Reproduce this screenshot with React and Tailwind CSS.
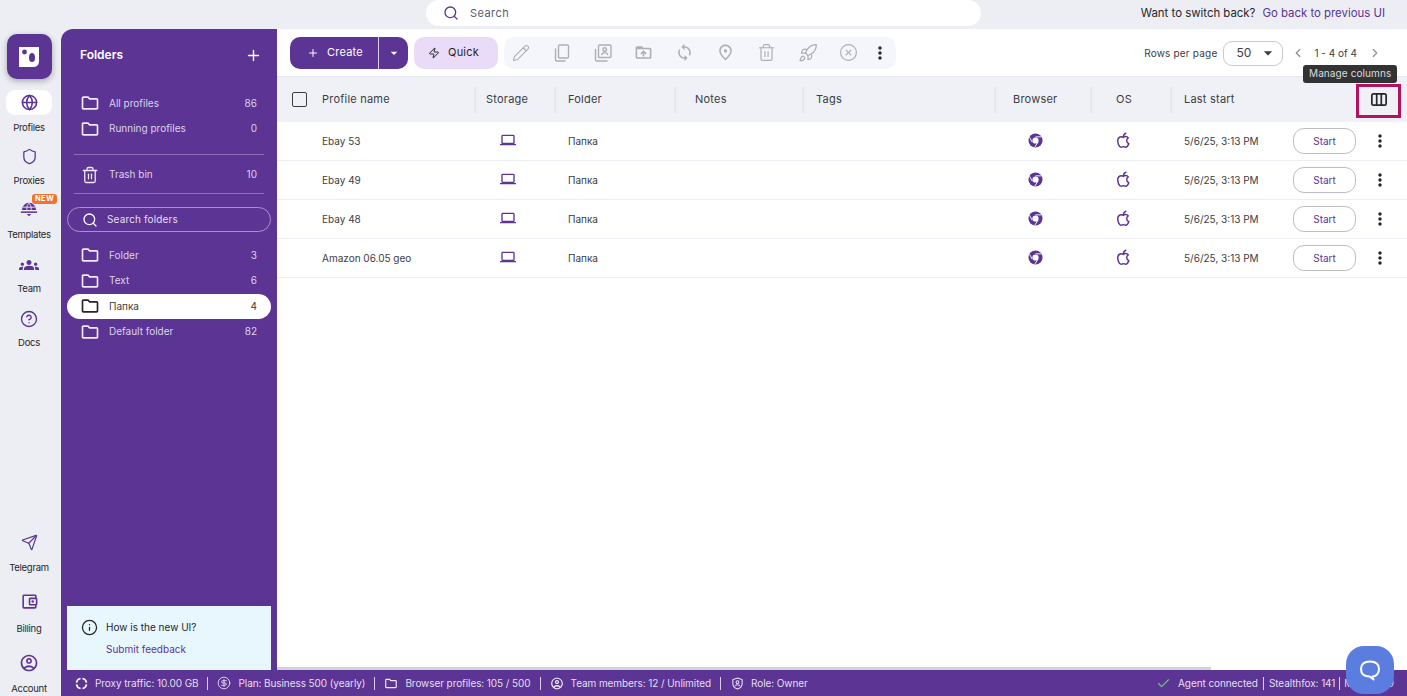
import {
  Check, ChevronLeft, ChevronRight, CircleDollarSign, CircleHelp, CircleX, Globe, Info,
  Pencil, Plus, Rocket, Search, Send, Shield, Trash2, Zap,
} from "lucide-react";
import {
  MdArrowDropDown, MdDriveFolderUpload, MdGroups, MdMoreVert, MdOutlineAccountBalanceWallet,
  MdOutlineAccountCircle, MdOutlineFolder, MdOutlineLaptop, MdOutlinePlace, MdSync,
} from "react-icons/md";

const profiles = ["Ebay 53", "Ebay 49", "Ebay 48", "Amazon 06.05 geo"];
const grid = "grid grid-cols-[198px_80px_120px_128px_192px_96px_80px_1fr]";

function Logo() {
  return (
    <svg viewBox="0 0 20 20" className="h-[20px] w-[20px]">
      <path d="M0 0H20V14Q20 20 14 20H0Z" fill="#fff" />
      <circle cx="5.500" cy="5" r="2.400" fill="#5b3494" />
      <ellipse cx="13" cy="10.500" rx="3" ry="4.600" fill="#5b3494" />
    </svg>
  );
}

function TemplatesIcon() {
  return (
    <svg viewBox="0 0 20 20" className="h-[18px] w-[18px] -translate-y-[2px]" fill="none" stroke="#5b3494" strokeWidth="1.700">
      <path d="M3 11a7 7 0 0 1 14 0" fill="#5b3494" />
      <path d="M7.500 11c0-4 1-6.500 2.500-7.500 1.500 1 2.500 3.500 2.500 7.500M3 8h14" stroke="#eceef3" strokeWidth="1" />
      <path d="M1 13.500h18" />
      <path d="M7.500 15.500h5L10 18z" fill="#5b3494" stroke="none" />
    </svg>
  );
}

function AppleIcon() {
  return (
    <svg viewBox="0 0 16 16" className="h-[17px] w-[17px]" fill="none" stroke="#5b3494" strokeWidth="1.400" strokeLinejoin="round" strokeLinecap="round">
      <path d="M8 5.200c-1-.8-2.200-1-3.300-.5C3 5.500 2.300 7.300 2.700 9.500c.4 2.300 1.800 4.800 3.300 4.800.8 0 1.200-.5 2-.5s1.200.5 2 .5c1.200 0 2.300-1.500 3-3.300-1.400-.7-2-1.800-2-3 0-1.100.5-1.900 1.500-2.500-.7-1-1.800-1.500-2.800-1.300-.7.1-1.200.4-1.700.5z" />
      <path d="M8 4.500c0-1.500.8-2.800 2.200-3.300" />
    </svg>
  );
}

function RailItem({ icon, label, active, badge, gap = "mt-[5px]" }) {
  return (
    <div className="relative flex min-h-[44px] w-full flex-col items-center">
      <div className={`flex h-[25px] w-[46px] items-center justify-center rounded-[9px] ${active ? "bg-white" : ""}`}>
        {icon}
      </div>
      {badge && (
        <span className="absolute right-[1px] top-[-4px] rounded-[3px] bg-[#f0742f] px-[3px] text-[7.500px] font-bold leading-[10px] tracking-[0.04em] text-white">
          NEW
        </span>
      )}
      <span className={`${gap} text-[9.500px] leading-[13px] tracking-[-0.03em] text-[#26262b]`}>{label}</span>
    </div>
  );
}

function FolderRow({ label, count, active, icon }) {
  return (
    <div
      className={`flex h-[25.500px] items-center rounded-[13px] px-[14px] ${
        active ? "bg-white text-[#3c3c42]" : "text-[#ddd3ec]"
      }`}
    >
      <span className={`flex w-[28px] ${active ? "text-[#26262b]" : "text-[#efeaf6]"}`}>
        {icon || <MdOutlineFolder size={20} className="-ml-[1px]" />}
      </span>
      <span className="flex-1 text-[10px]">{label}</span>
      <span className="text-[10px]">{count}</span>
    </div>
  );
}

function ToolIcon({ children }) {
  return <span className="flex w-[41px] items-center justify-center text-[#aeafb3]">{children}</span>;
}

function CopyIcon() {
  return (
    <svg viewBox="0 0 18 18" className="h-[18px] w-[18px]" fill="none" stroke="currentColor" strokeWidth="1.400">
      <rect x="5.500" y="1" width="10" height="13" rx="1" />
      <path d="M2.500 4.500V16a1 1 0 0 0 1 1h9" />
    </svg>
  );
}

function PortraitIcon() {
  return (
    <svg viewBox="0 0 18 18" className="h-[18px] w-[18px]" fill="none" stroke="currentColor" strokeWidth="1.400">
      <rect x="4.500" y="1" width="12.500" height="12.500" rx="1" />
      <circle cx="10.700" cy="5.500" r="1.800" />
      <path d="M7.500 11c.5-1.800 1.800-2.400 3.200-2.400s2.700.6 3.200 2.400" />
      <path d="M1.500 5v11a1 1 0 0 0 1 1h11" />
    </svg>
  );
}

function ColumnsIcon() {
  return (
    <svg viewBox="0 0 16 13" className="h-[13px] w-[16px]" fill="none" stroke="#26262b" strokeWidth="1.700">
      <rect x=".85" y=".85" width="14.300" height="11.300" rx="1.500" />
      <path d="M5.700 .85v11.300M10.300 .85v11.300" />
    </svg>
  );
}

function BrowserIcon() {
  return (
    <svg viewBox="0 0 16 16" className="h-[15px] w-[15px]">
      <circle cx="8" cy="8" r="7.500" fill="#5b3494" />
      <circle cx="8" cy="8" r="3.300" fill="#fff" />
      <path d="M8 4.100h6.300M4.500 9.800 1.600 4.500M10.800 9.500 7.300 15" stroke="#fff" strokeWidth="1" />
    </svg>
  );
}

function TrafficIcon() {
  return (
    <svg viewBox="0 0 14 14" className="h-[13px] w-[13px]" fill="none" stroke="#fff" strokeWidth="1.800">
      <path d="M6 1.600A5.500 5.500 0 0 0 1.600 6M1.600 8A5.500 5.500 0 0 0 6 12.400M8 12.400A5.500 5.500 0 0 0 12.400 8M12.400 6A5.500 5.500 0 0 0 8 1.600" />
    </svg>
  );
}

function RoleIcon() {
  return (
    <svg viewBox="0 0 14 14" className="h-[13px] w-[13px]" fill="none" stroke="#efeaf6" strokeWidth="1.100">
      <path d="M7 1 12 2.800V7c0 3-2.200 5-5 6-2.800-1-5-3-5-6V2.800z" />
      <circle cx="7" cy="5.600" r="1.500" />
      <path d="M4.500 9.800C5 8.800 6 8.400 7 8.400s2 .4 2.500 1.400" />
    </svg>
  );
}

function StatusItem({ icon, text }) {
  return (
    <span className="flex items-center gap-[7px] text-[10px] tracking-[-0.008em] text-[#e6dff1]">
      <span className="flex w-[14px] justify-center text-[#efeaf6]">{icon}</span>
      {text}
    </span>
  );
}

function Sep() {
  return <span className="mx-[9px] h-[13px] w-px bg-[#d9d0e8]" />;
}

function HeadCell({ children, pad = "pl-[11px]" }) {
  return (
    <div className={`-ml-px flex h-[26px] items-center border-l-2 border-[#e4e6eb] text-[11px] tracking-[0.02em] text-[#3c3c42] ${pad}`}>
      {children}
    </div>
  );
}

export default function App() {
  return (
    <div className="flex h-screen w-full overflow-hidden bg-[#eceef3] font-['Inter',sans-serif]">
      {/* Rail */}
      <aside className="flex w-[61px] shrink-0 flex-col items-center pr-[3px] pt-[34px]">
        <div className="flex h-[45px] w-[45px] items-center justify-center rounded-[10px] bg-[#5b3494] shadow-[0_2px_6px_rgba(0,0,0,0.3)]">
          <Logo />
        </div>
        <div className="mt-[11px] flex w-full flex-col gap-[10px]">
          <RailItem active label="Profiles" gap="mt-[6px]" icon={<Globe size={17} strokeWidth={2.200} className="text-[#5b3494]" />} />
          <RailItem label="Proxies" icon={<Shield size={17} strokeWidth={1.800} className="text-[#5b3494]" />} />
          <RailItem label="Templates" badge icon={<TemplatesIcon />} />
          <RailItem label="Team" icon={<MdGroups size={20} className="text-[#5b3494]" />} />
          <RailItem label="Docs" icon={<CircleHelp size={18} strokeWidth={1.800} className="text-[#5b3494]" />} />
        </div>
        <div className="mt-auto flex w-full flex-col gap-[15px] pb-[1px]">
          <RailItem label="Telegram" gap="mt-[6px]" icon={<Send size={17} strokeWidth={1.700} className="text-[#5b3494]" />} />
          <RailItem label="Billing" icon={<MdOutlineAccountBalanceWallet size={19} className="text-[#5b3494]" />} gap="mt-[8px]" />
          <RailItem label="Account" icon={<MdOutlineAccountCircle size={20} className="text-[#5b3494]" />} gap="mt-[7px]" />
        </div>
      </aside>

      <div className="flex min-w-0 flex-1 flex-col">
        {/* Top bar */}
        <header className="flex h-[29px] shrink-0 items-start">
          <div className="ml-[365px] flex h-[26px] w-[555px] items-center rounded-[13px] bg-white pl-[17px]">
            <Search size={16} strokeWidth={2} className="text-[#5b3494]" />
            <span className="ml-[11px] text-[11px] tracking-[0.04em] text-[#5c5c64]">Search</span>
          </div>
          <div className="ml-auto flex h-[26px] items-center pr-[22px] pt-[1px] text-[11.400px]">
            <span className="text-[#26262b]">Want to switch back?</span>
            <span className="ml-[7px] text-[#5b3494]">Go back to previous UI</span>
          </div>
        </header>

        <div className="flex min-h-0 flex-1">
          {/* Folders */}
          <aside className="flex w-[216px] shrink-0 flex-col rounded-tl-[12px] bg-[#5b3494] pt-[17px]">
            <div className="flex h-[18px] items-center justify-between pl-[19px] pr-[15px] text-white">
              <span className="text-[12px] font-semibold">Folders</span>
              <Plus size={17} strokeWidth={2} />
            </div>
            <div className="mx-[6px] mt-[26.500px] flex flex-col">
              <FolderRow label="All profiles" count="86" />
              <FolderRow label="Running profiles" count="0" />
            </div>
            <div className="mx-[13px] mt-[12.500px] border-t border-[#8c70b4]" />
            <div className="mx-[6px] mt-[7px]">
              <FolderRow label="Trash bin" count="10" icon={<Trash2 size={18} strokeWidth={1.700} />} />
            </div>
            <div className="mx-[13px] mt-[5px] border-t border-[#8c70b4]" />
            <div className="mx-[6px] mt-[13.500px] flex h-[25px] shrink-0 items-center rounded-[13px] border border-[#a893c8] pl-[14px] text-[#e6dff1]">
              <Search size={16} strokeWidth={2} className="text-white" />
              <span className="ml-[9px] text-[10px] tracking-[0.015em]">Search folders</span>
            </div>
            <div className="mx-[6px] mt-[10.500px] flex flex-col">
              <FolderRow label="Folder" count="3" />
              <FolderRow label="Text" count="6" />
              <FolderRow label="Папка" count="4" active />
              <FolderRow label="Default folder" count="82" />
            </div>
            <div className="mx-[6px] mt-auto h-[64px] bg-[#e8f7fe] pl-[14px] pt-[13px]">
              <div className="flex items-center gap-[8px]">
                <Info size={17} strokeWidth={1.800} className="text-[#26262b]" />
                <span className="text-[10px] text-[#26262b]">How is the new UI?</span>
              </div>
              <div className="ml-[25px] mt-[6px] text-[10px] text-[#5b3494]">Submit feedback</div>
            </div>
          </aside>

          {/* Main */}
          <main className="relative flex min-w-0 flex-1 flex-col bg-white">
            <div className="flex h-[48px] shrink-0 items-center border-b border-[#e4e6eb] pl-[13px] pr-[25px]">
              <div className="flex h-[32px] w-[118px] items-center rounded-[10px] bg-[#5b3494] text-white">
                <Plus size={12} strokeWidth={2} className="ml-[17px]" />
                <span className="ml-[8px] text-[11px] tracking-[0.02em]">Create</span>
                <span className="ml-auto flex h-full w-[30px] items-center justify-center border-l border-[#d9d0e8]">
                  <MdArrowDropDown size={16} />
                </span>
              </div>
              <div className="ml-[6px] flex h-[32px] w-[84px] items-center rounded-[10px] bg-[#eadcf9] pl-[14px] text-[#26262b]">
                <Zap size={12} strokeWidth={2} />
                <span className="ml-[8px] text-[11px] tracking-[0.02em]">Quick</span>
              </div>
              <div className="ml-[6px] flex h-[32px] w-[392px] items-center rounded-[10px] bg-[#f5f6fb]">
                <span className="-ml-[4px] flex">
                  <ToolIcon><Pencil size={18} strokeWidth={1.500} /></ToolIcon>
                </span>
                <ToolIcon><CopyIcon /></ToolIcon>
                <ToolIcon><PortraitIcon /></ToolIcon>
                <ToolIcon><MdDriveFolderUpload size={19} /></ToolIcon>
                <ToolIcon><MdSync size={19} /></ToolIcon>
                <ToolIcon><MdOutlinePlace size={19} /></ToolIcon>
                <ToolIcon><Trash2 size={19} strokeWidth={1.500} /></ToolIcon>
                <ToolIcon><Rocket size={20} strokeWidth={1.500} /></ToolIcon>
                <ToolIcon><CircleX size={19} strokeWidth={1.500} /></ToolIcon>
                <MdMoreVert size={20} className="ml-[1px] text-[#26262b]" />
              </div>
              <span className="ml-auto mt-[1px] text-[10px] tracking-[0.02em] text-[#3c3c42]">Rows per page</span>
              <div className="ml-[6px] mt-[1px] flex h-[25px] w-[60px] items-center justify-between rounded-[9px] border border-[#c9c9cf] pl-[12px] pr-[4px] text-[12px] text-[#3c3c42]">
                50
                <MdArrowDropDown size={20} className="text-[#3c3c42]" />
              </div>
              <ChevronLeft size={14} className="ml-[8px] text-[#8c8c94]" />
              <span className="ml-[9px] mt-[1px] text-[10px] text-[#3c3c42]">1 - 4 of 4</span>
              <ChevronRight size={14} className="ml-[11px] text-[#8c8c94]" />
            </div>

            {/* Table */}
            <div className={`${grid} h-[45px] shrink-0 items-center bg-[#eff1f6]`}>
              <div className="flex items-center pl-[15px] text-[11px] tracking-[0.02em] text-[#3c3c42]">
                <span className="h-[15px] w-[15px] rounded-[2px] border-[1.500px] border-[#3c3c42]" />
                <span className="ml-[15px]">Profile name</span>
              </div>
              <HeadCell pad="pl-[10px]">Storage</HeadCell>
              <HeadCell pad="pl-[12px]">Folder</HeadCell>
              <HeadCell pad="pl-[19px]">Notes</HeadCell>
              <HeadCell pad="pl-[12px]">Tags</HeadCell>
              <HeadCell pad="pl-[17px]">Browser</HeadCell>
              <HeadCell pad="pl-[24px]">OS</HeadCell>
              <HeadCell pad="pl-[12px]">Last start</HeadCell>
            </div>
            {profiles.map((name) => (
              <div key={name} className={`${grid} h-[39px] shrink-0 items-center border-b border-[#eceef3] text-[10px] text-[#3c3c42]`}>
                <span className="pl-[45px]">{name}</span>
                <span className="flex -translate-y-[1px] pl-[25px] text-[#5b3494]"><MdOutlineLaptop size={16} /></span>
                <span className="pl-[13px]">Папка</span>
                <span />
                <span />
                <span className="flex -translate-y-[1px] justify-center pr-[16px]"><BrowserIcon /></span>
                <span className="flex -translate-y-[1px] pl-[24px]"><AppleIcon /></span>
                <div className="flex items-center pl-[13px]">
                  <span className="w-[109px]">5/6/25, 3:13 PM</span>
                  <span className="flex h-[26px] w-[63px] items-center justify-center rounded-[11px] border border-[#bdbdc4] text-[#5b3494]">Start</span>
                  <MdMoreVert size={20} className="ml-[14px] text-[#26262b]" />
                </div>
              </div>
            ))}
            <div className="mt-auto h-[3px] w-[934px] bg-[#d2d3d9]" />

            {/* Manage columns highlight */}
            <div className="absolute left-[1026px] top-[36px] rounded-[3px] bg-[#333336] px-[6px] pb-[4px] pt-[2px] text-[10px] leading-[12px] tracking-[0.01em] text-[#dcdcdc]">
              Manage columns
            </div>
            <div className="absolute left-[1079px] top-[55px] flex h-[34px] w-[45px] items-center justify-center border-[3px] border-[#b3125e] pb-[4px] pl-[1px]">
              <ColumnsIcon />
            </div>
          </main>
        </div>

        {/* Status bar */}
        <footer className="flex h-[26px] shrink-0 items-center bg-[#5b3494] pl-[13px] pr-[13px]">
          <StatusItem icon={<TrafficIcon />} text="Proxy traffic: 10.00 GB" />
          <Sep />
          <StatusItem icon={<CircleDollarSign size={14} strokeWidth={1.400} />} text="Plan: Business 500 (yearly)" />
          <Sep />
          <StatusItem icon={<MdOutlineFolder size={15} />} text="Browser profiles: 105 / 500" />
          <Sep />
          <StatusItem icon={<MdOutlineAccountCircle size={15} />} text="Team members: 12 / Unlimited" />
          <Sep />
          <StatusItem icon={<RoleIcon />} text="Role: Owner" />
          <span className="ml-auto flex items-center text-[10px] tracking-[-0.008em] text-[#e6dff1]">
            <Check size={15} strokeWidth={1.800} className="mr-[7px] text-[#5fd07a]" />
            Agent connected
            <span className="mx-[5px] h-[13px] w-px bg-[#d9d0e8]" />
            Stealthfox: 141
            <span className="mx-[4px] h-[13px] w-px bg-[#d9d0e8]" />
            Mimic: 139
          </span>
        </footer>
      </div>

      {/* Chat */}
      <div className="absolute bottom-[2px] left-[1346px] flex h-[48px] w-[48px] items-center justify-center rounded-[18px] bg-[#5b7de0]">
        <svg viewBox="0 0 24 24" className="h-[24px] w-[24px]" fill="none" stroke="#fff" strokeWidth="2">
          <path d="M12 3.500c6 0 9 2.800 9 7.500s-3 7.500-6.500 7.500l1 3-4-3c-5.500 0-8.500-2.800-8.500-7.500s3-7.500 9-7.500z" strokeLinejoin="round" />
        </svg>
      </div>
    </div>
  );
}
